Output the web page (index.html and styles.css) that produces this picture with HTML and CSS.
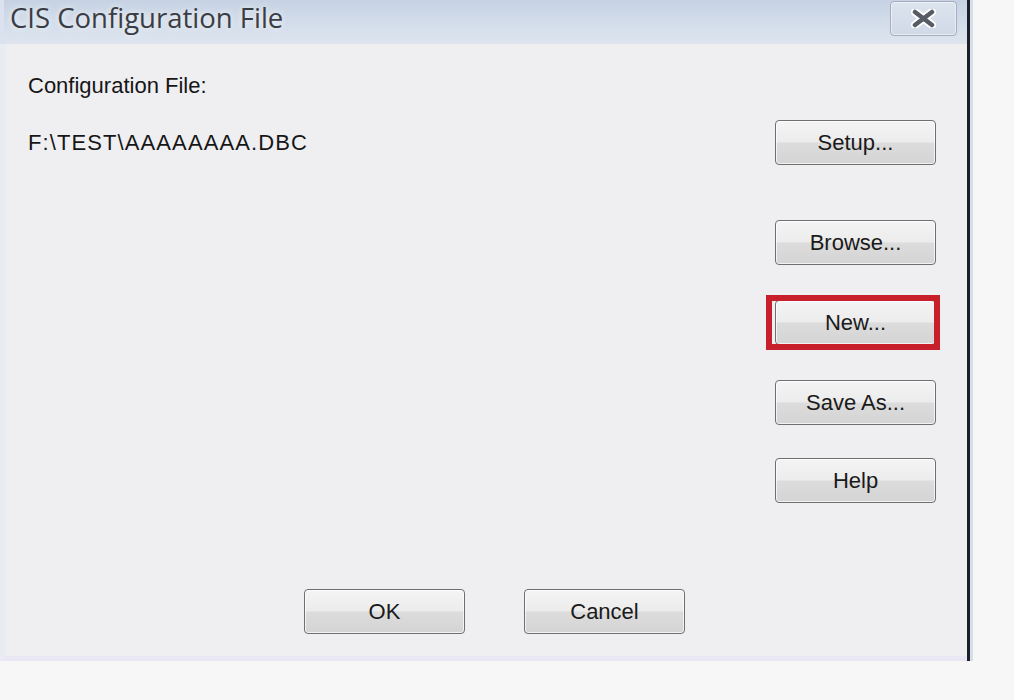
FILE: index.html
```html
<!DOCTYPE html>
<html lang="en">
<head>
  <meta charset="UTF-8" />
  <title>CIS Configuration File</title>
  <link rel="stylesheet" href="styles.css">
</head>
<body>
  <div class="window">
    <div class="titlebar">
      <span class="title">CIS Configuration File</span>
      <button class="close" aria-label="Close">
        <svg width="25" height="19" viewBox="0 0 25 19">
          <path d="M4 3 L21 16 M21 3 L4 16" stroke="#fff" stroke-width="8" stroke-linecap="round" />
          <path d="M4 3 L21 16 M21 3 L4 16" stroke="#565b64" stroke-width="4.5" stroke-linecap="round" />
        </svg>
      </button>
    </div>
    <div class="content">
      <div class="main">
        <div class="fields">
          <div class="label">Configuration File:</div>
          <div class="path">F:\TEST\AAAAAAAA.DBC</div>
        </div>
        <div class="side">
          <button class="btn">Setup...</button>
          <button class="btn gap-lg">Browse...</button>
          <div class="marked gap-md">
            <button class="btn">New...</button>
            <span class="mark"></span>
          </div>
          <button class="btn gap-md">Save As...</button>
          <button class="btn gap-sm">Help</button>
        </div>
      </div>
      <div class="footer">
        <button class="btn">OK</button>
        <button class="btn">Cancel</button>
      </div>
    </div>
  </div>
</body>
</html>
```

FILE: styles.css
```css
body { margin: 0; background: #f7f7f7; font-family: "Liberation Sans", Arial, sans-serif; }
.window { width: 967px; height: 661px; border-right: 3px solid #1c2029; box-shadow: 3px 0 0 #d6deea; background: #efeff2; display: flex; flex-direction: column; }
.titlebar { height: 44px; flex: none; display: flex; justify-content: space-between; align-items: flex-start; background: linear-gradient(#c6d2e3, #d7e0ec 70%, #dde4ee); border-left: 4px solid #d9e2ee; }
.title { font-family: "Open Sans", "Noto Sans", sans-serif; font-size: 27.5px; line-height: 36px; color: #3a3d44; padding: 0 0 0 6px; text-shadow: 0 0 6px rgba(255,255,255,0.9); }
.close { width: 67px; height: 35px; margin: 1px 10px 0 0; border: 1px solid #a3adbd; border-radius: 4px; background: linear-gradient(#dce4ef, #d0d9e6); display: flex; align-items: center; justify-content: center; padding: 0; box-shadow: inset 0 0 0 1px rgba(255,255,255,0.5); }
.content { flex: 1; display: flex; flex-direction: column; border-left: 6px solid #e8ecf3; border-bottom: 5px solid #e8e7f3; }
.main { flex: 1; display: flex; padding: 29px 31px 0 22px; }
.fields { flex: 1; }
.label { font-size: 22px; line-height: 26px; color: #161616; }
.path { font-size: 22px; line-height: 26px; color: #161616; margin-top: 31px; letter-spacing: 1.1px; }
.side { display: flex; flex-direction: column; padding-top: 47px; }
.btn { width: 161px; height: 45px; border: 1px solid #6f6f6f; border-radius: 4px; background: linear-gradient(#f4f4f4, #ececec 48%, #dcdcdc 52%, #d4d4d4); box-shadow: inset 0 0 0 1px rgba(255,255,255,0.7); font-family: "Liberation Sans", Arial, sans-serif; font-size: 22px; color: #1a1a1a; padding: 0; }
.gap-lg { margin-top: 55px; }
.gap-md { margin-top: 35px; }
.gap-sm { margin-top: 33px; }
.marked { position: relative; width: 161px; }
.marked .btn { display: block; }
.mark { position: absolute; left: -9px; top: -5px; right: -4px; bottom: -5px; border: 6px solid #c8202b; }
.footer { display: flex; justify-content: center; gap: 59px; padding: 0 0 22px 16px; }
```
